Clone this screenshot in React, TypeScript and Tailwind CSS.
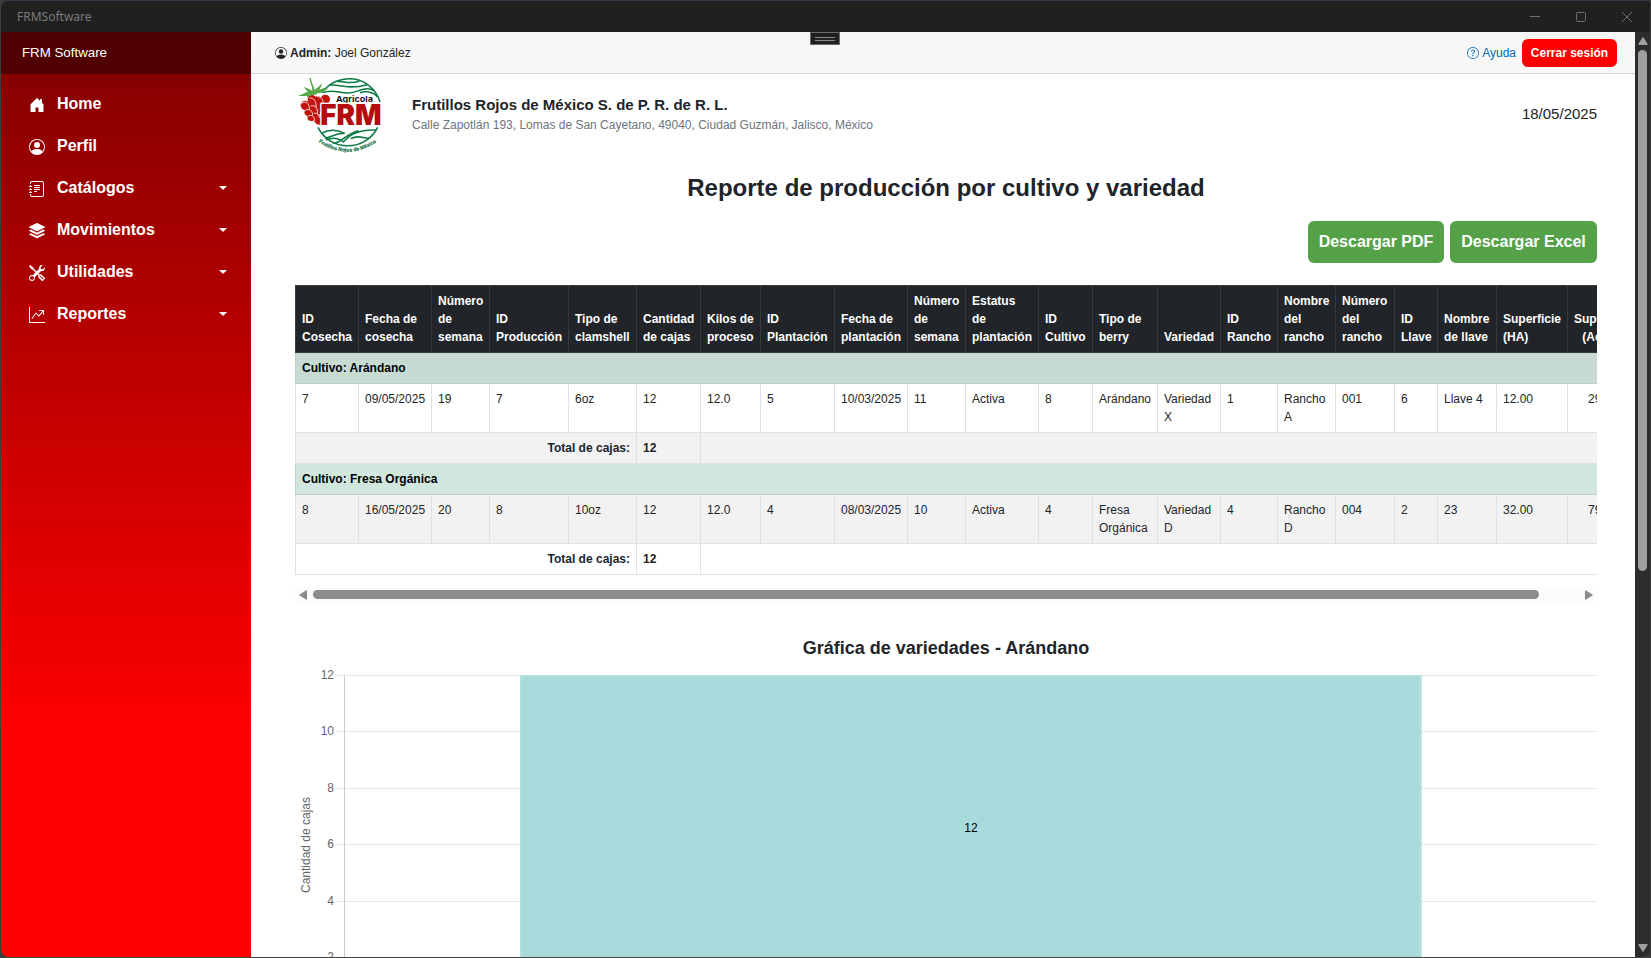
import React from "react";
import {
  BsHouseDoorFill,
  BsPersonCircle,
  BsJournalText,
  BsStack,
  BsTools,
  BsGraphUpArrow,
  BsQuestionCircle,
} from "react-icons/bs";

const NAV = [
  { label: "Home", icon: BsHouseDoorFill, sub: false },
  { label: "Perfil", icon: BsPersonCircle, sub: false },
  { label: "Catálogos", icon: BsJournalText, sub: true },
  { label: "Movimientos", icon: BsStack, sub: true },
  { label: "Utilidades", icon: BsTools, sub: true },
  { label: "Reportes", icon: BsGraphUpArrow, sub: true },
];

const COLUMNS: { label: string; width: number }[] = [
  { label: "ID\nCosecha", width: 63 },
  { label: "Fecha de\ncosecha", width: 73 },
  { label: "Número\nde\nsemana", width: 58 },
  { label: "ID\nProducción", width: 79 },
  { label: "Tipo de\nclamshell", width: 68 },
  { label: "Cantidad\nde cajas", width: 64 },
  { label: "Kilos de\nproceso", width: 60 },
  { label: "ID\nPlantación", width: 74 },
  { label: "Fecha de\nplantación", width: 73 },
  { label: "Número\nde\nsemana", width: 58 },
  { label: "Estatus\nde\nplantación", width: 73 },
  { label: "ID\nCultivo", width: 54 },
  { label: "Tipo de\nberry", width: 65 },
  { label: "Variedad", width: 63 },
  { label: "ID\nRancho", width: 57 },
  { label: "Nombre\ndel\nrancho", width: 58 },
  { label: "Número\ndel\nrancho", width: 59 },
  { label: "ID\nLlave", width: 43 },
  { label: "Nombre\nde llave", width: 59 },
  { label: "Superficie\n(HA)", width: 71 },
  { label: "Superficie\n(Acres)", width: 71 },
];

const TABLE_WIDTH = COLUMNS.reduce((sum, c) => sum + c.width, 0) + 1;

const GROUPS = [
  {
    name: "Arándano",
    head: "bg-[#c7dbd2]",
    row: "bg-white",
    total: "bg-[#f2f2f2]",
    cells: ["7", "09/05/2025", "19", "7", "6oz", "12", "12.0", "5", "10/03/2025", "11", "Activa", "8", "Arándano", "Variedad\nX", "1", "Rancho\nA", "001", "6", "Llave 4", "12.00", "29.65"],
  },
  {
    name: "Fresa Orgánica",
    head: "bg-[#d1e7dd]",
    row: "bg-[#f2f2f2]",
    total: "bg-white",
    cells: ["8", "16/05/2025", "20", "8", "10oz", "12", "12.0", "4", "08/03/2025", "10", "Activa", "4", "Fresa\nOrgánica", "Variedad\nD", "4", "Rancho\nD", "004", "2", "23", "32.00", "79.07"],
  },
];

function Logo() {
  return (
    <svg viewBox="48 45 264 240" className="ml-px h-[80px] w-[88px] shrink-0">
      <defs>
        <path id="arc" d="M112 244Q204 308 300 240" />
      </defs>
      <g fill="none" stroke="#0b7a43" strokeWidth="4.6">
        <path d="M127 98A97 97 0 0 1 300 126" />
        <path d="M152 76C176 70 196 92 262 74" />
        <path d="M172 65C192 62 204 74 238 64" />
        <path d="M130 98C166 82 190 112 236 92C256 84 270 84 282 92" />
        <path d="M240 98C262 92 280 98 292 110" />
        <path d="M114 202A100 100 0 0 0 293 202" />
        <path d="M124 220C150 206 174 210 194 220C160 220 152 234 134 234" />
        <path d="M138 240C160 230 178 236 190 246C214 216 252 208 290 210" />
        <path d="M158 250C186 248 196 222 236 212" />
        <path d="M212 236C236 222 254 238 270 234" />
      </g>
      <g fill="#c4120c">
        <circle cx="96" cy="118" r="13" />
        <circle cx="76" cy="136" r="14" />
        <circle cx="114" cy="122" r="13" />
        <circle cx="136" cy="118" r="14" />
        <circle cx="97" cy="139" r="14" />
        <circle cx="86" cy="156" r="13" />
        <circle cx="108" cy="156" r="13" />
        <circle cx="94" cy="171" r="12" />
        <circle cx="112" cy="177" r="12" />
        <circle cx="116" cy="185" r="9" />
        <circle cx="120" cy="142" r="13" />
      </g>
      <g fill="none" stroke="#fff" strokeWidth="2.4">
        <path d="M64 130C78 122 88 128 88 148M88 114C100 112 110 124 108 142M112 110C124 110 132 120 128 134" />
        <path d="M72 154C82 144 98 148 98 166M92 138C106 134 114 144 112 162M82 170C92 162 104 166 104 184M102 160C110 158 118 164 118 174" />
      </g>
      <path d="M53 107C70 104 74 96 84 96L71 81C84 84 92 90 97 92C98 78 88 68 89 54L93 54C93 68 102 76 103 90C112 84 118 80 125 70C124 80 122 84 118 89C128 86 138 82 146 82C136 94 126 100 112 100C108 108 92 102 82 113C84 104 76 110 53 107Z" fill="#57a64a" />
      <text x="168" y="125" fontSize="24" fontWeight="700" fill="#161616" stroke="#fff" strokeWidth="5" paintOrder="stroke" textLength="111" lengthAdjust="spacingAndGlyphs" fontFamily="Inter, sans-serif">Agricola</text>
      <text x="121" y="194" fontSize="84" fontWeight="900" fill="#b40d0d" stroke="#fff" strokeWidth="8" paintOrder="stroke" textLength="184" lengthAdjust="spacingAndGlyphs" fontFamily="Inter, sans-serif">FRM</text>
      <text fontSize="15.3" fontWeight="700" fill="#0b6b3b" stroke="#0b6b3b" strokeWidth="0.5" fontFamily="'Liberation Sans', sans-serif">
        <textPath href="#arc" startOffset="4">Frutillos Rojos de México</textPath>
      </text>
    </svg>
  );
}

function TitleBar() {
  return (
    <div className="flex h-[31px] shrink-0 items-center justify-between rounded-tl-lg bg-[#202020] pl-4 pr-[18px]">
      <span className="font-['Noto_Sans','Open_Sans',sans-serif] text-[12px] text-[#7b7b7b]">FRMSoftware</span>
      <div className="flex items-center gap-9 text-[#6e6e6e]">
        <svg width="10" height="10" viewBox="0 0 10 10" stroke="currentColor"><path d="M0 4.5H10" /></svg>
        <svg width="10" height="10" viewBox="0 0 10 10" stroke="currentColor" fill="none"><rect x="0.5" y="0.5" width="9" height="9" rx="1" /></svg>
        <svg width="10" height="10" viewBox="0 0 10 10" stroke="currentColor"><path d="M0 0L10 10M10 0L0 10" /></svg>
      </div>
    </div>
  );
}

function Sidebar() {
  return (
    <aside className="flex w-[250px] shrink-0 flex-col bg-[linear-gradient(180deg,#800000_0%,#ff0000_76%)] text-white">
      <div className="flex h-[42px] items-center bg-black/40 pl-[21px] text-[13.3px] leading-none">
        <span>FRM Software</span>
      </div>
      <nav className="flex flex-col pt-[9px]">
        {NAV.map(({ label, icon: Icon, sub }) => (
          <div key={label} className="flex h-[42px] items-center pl-7 pr-6">
            <Icon className="mt-0.5 size-4" />
            <span className="ml-3 flex-1 text-base font-bold leading-none">{label}</span>
            {sub && <span className="border-x-4 border-t-4 border-x-transparent border-t-white" />}
          </div>
        ))}
      </nav>
    </aside>
  );
}

function TopBar() {
  return (
    <div className="flex h-[42px] shrink-0 items-center justify-between border-b border-[#d6d5d5] bg-[#f7f7f7] pl-6 pr-[18px] text-[12px] text-[#212529]">
      <div className="flex items-center">
        <BsPersonCircle className="mr-[3px] size-3" />
        <span><b>Admin:</b> Joel González</span>
      </div>
      <div className="flex items-center">
        <BsQuestionCircle className="mr-[3px] size-3 text-[#006bb7]" />
        <span className="text-[#006bb7]">Ayuda</span>
        <button className="ml-1.5 h-7 w-[95px] rounded-md bg-[#ff0000] text-[12px] font-bold text-white">Cerrar sesión</button>
      </div>
    </div>
  );
}

function ProductionTable() {
  return (
    <div className="overflow-hidden">
      <table className="table-fixed border-collapse text-[12px] leading-[18px] text-[#212529]" style={{ width: TABLE_WIDTH }}>
        <colgroup>
          {COLUMNS.map((c, i) => (
            <col key={i} style={{ width: c.width }} />
          ))}
        </colgroup>
        <thead>
          <tr className="bg-[#212529] text-white">
            {COLUMNS.map((c, i) => (
              <th key={i} className="whitespace-pre border border-[#373b3e] p-1.5 text-left align-bottom font-bold last:text-center">
                {c.label}
              </th>
            ))}
          </tr>
        </thead>
        <tbody>
          {GROUPS.map((g) => (
            <React.Fragment key={g.name}>
              <tr className={g.head}>
                <td colSpan={21} className="border border-[#bcd0c7] p-1.5 font-bold text-black">Cultivo: {g.name}</td>
              </tr>
              <tr className={g.row}>
                {g.cells.map((c, i) => (
                  <td key={i} className="whitespace-pre border border-[#dee2e6] p-1.5 align-top last:text-center">{c}</td>
                ))}
              </tr>
              <tr className={g.total}>
                <td colSpan={5} className="border border-[#dee2e6] p-1.5 text-right font-bold">Total de cajas:</td>
                <td className="border border-[#dee2e6] p-1.5 font-bold">12</td>
                <td colSpan={15} className="border border-[#dee2e6] p-1.5" />
              </tr>
            </React.Fragment>
          ))}
        </tbody>
      </table>
      <div className="mt-3 flex h-[15px] items-center bg-[#fcfcfc] px-1">
        <svg width="8" height="10" viewBox="0 0 8 10" fill="#8b8b8b"><path d="M8 1V9Q8 10 7 9.6L0.6 5.6Q0 5 0.6 4.4L7 0.4Q8 0 8 1Z" /></svg>
        <div className="ml-1.5 h-[9px] w-[1226px] rounded-full bg-[#8b8b8b]" />
        <svg className="ml-auto" width="8" height="10" viewBox="0 0 8 10" fill="#8b8b8b"><path d="M0 1V9Q0 10 1 9.6L7.4 5.6Q8 5 7.4 4.4L1 0.4Q0 0 0 1Z" /></svg>
      </div>
    </div>
  );
}

const TICKS = [
  { v: 12, y: 16 },
  { v: 10, y: 72 },
  { v: 8, y: 129 },
  { v: 6, y: 185 },
  { v: 4, y: 242 },
  { v: 2, y: 298 },
];

function VarietyChart() {
  return (
    <svg width="1302" height="298" viewBox="0 0 1302 298" className="block" fontFamily="'Liberation Sans', Arial, sans-serif" fontSize="12">
      {TICKS.map((t) => (
        <g key={t.v}>
          <rect x="42" y={t.y} width="1260" height="1" fill="#e5e5e5" />
          <text x="39" y={t.y + 4} textAnchor="end" fill="#666">{t.v}</text>
        </g>
      ))}
      <rect x="49" y="16" width="1" height="290" fill="#c9c9c9" />
      <rect x="225" y="16" width="901.5" height="300" fill="#a8dadb" />
      <path d="M226 300V17H1125.5V300" fill="none" stroke="#b2e0dd" strokeWidth="2" />
      <text x="676" y="173" textAnchor="middle" fill="#000">12</text>
      <text transform="translate(15 186) rotate(-90)" textAnchor="middle" fill="#666">Cantidad de cajas</text>
    </svg>
  );
}

function PageScrollbar() {
  return (
    <div className="flex w-[15px] shrink-0 flex-col items-center bg-[#2c2c2c] pb-[5px] pt-[5px]">
      <svg width="10" height="8" viewBox="0 0 10 8" fill="#9f9f9f"><path d="M1 8H9Q10 8 9.6 7L5.6 0.6Q5 0 4.4 0.6L0.4 7Q0 8 1 8Z" /></svg>
      <div className="mt-[5px] h-[521px] w-[9px] rounded-full bg-[#9f9f9f]" />
      <svg className="mt-auto" width="10" height="8" viewBox="0 0 10 8" fill="#9f9f9f"><path d="M1 0H9Q10 0 9.6 1L5.6 7.4Q5 8 4.4 7.4L0.4 1Q0 0 1 0Z" /></svg>
    </div>
  );
}

export default function App() {
  return (
    <div className="relative flex h-[958px] w-[1651px] flex-col overflow-hidden border border-b-[#444] border-l-[#3c3f41] border-r-[#3a3a3a] border-t-[#3a3648] bg-[#383838] font-['Liberation_Sans',Arial,sans-serif]">
      <TitleBar />
      <div className="flex min-h-0 flex-1 overflow-hidden rounded-b-lg">
        <Sidebar />
        <div className="flex min-w-0 flex-1 flex-col bg-white">
          <TopBar />
          <main className="flex min-h-0 flex-1 flex-col overflow-hidden pl-11 pr-[38px] text-[#212529]">
            <header className="flex h-[82px] shrink-0 items-start pt-px">
              <Logo />
              <div className="ml-7 mt-5 flex-1">
                <div className="mb-px text-[15px] font-bold leading-5">Frutillos Rojos de México S. de P. R. de R. L.</div>
                <div className="text-[12px] leading-[18px] text-[#6c757d]">Calle Zapotlán 193, Lomas de San Cayetano, 49040, Ciudad Guzmán, Jalisco, México</div>
              </div>
              <div className="mt-[28px] text-[15px] leading-[22px]">18/05/2025</div>
            </header>
            <h1 className="mt-[17px] text-center text-[24px] font-bold leading-[29px]">Reporte de producción por cultivo y variedad</h1>
            <div className="mt-[19px] flex justify-end gap-1.5">
              <button className="h-[42px] w-[136px] rounded-md bg-[#55a148] text-base font-bold text-white">Descargar PDF</button>
              <button className="h-[42px] w-[147px] rounded-md bg-[#55a148] text-base font-bold text-white">Descargar Excel</button>
            </div>
            <div className="mt-[22px] shrink-0">
              <ProductionTable />
            </div>
            <h2 className="mt-[35px] text-center text-[18px] font-bold leading-[22px]">Gráfica de variedades - Arándano</h2>
            <div className="shrink-0">
              <VarietyChart />
            </div>
          </main>
        </div>
        <PageScrollbar />
      </div>
      <div className="absolute left-[809px] top-[31px] flex h-[13px] w-[30px] flex-col items-center justify-center gap-0.5 border border-[#6b6b6b] bg-[#202020]">
        <span className="h-px w-5 bg-[#8a8a8a]" />
        <span className="h-px w-5 bg-[#8a8a8a]" />
      </div>
    </div>
  );
}
